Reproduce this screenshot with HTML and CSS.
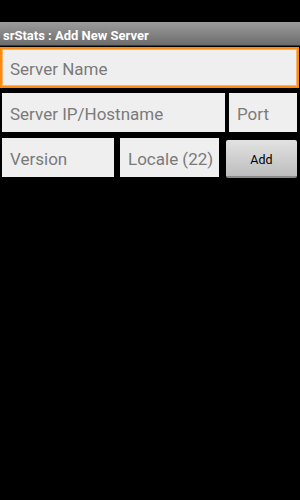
FILE: index.html
```html
<!DOCTYPE html>
<html>
<head>
<meta charset="utf-8">
<link rel="stylesheet" href="styles.css">
</head>
<body>
<div class="status"></div>
<div class="titlebar">srStats : Add New Server</div>
<div class="form">
  <div class="field focused">Server Name</div>
  <div class="row row2">
    <div class="field ip">Server IP/Hostname</div>
    <div class="field port">Port</div>
  </div>
  <div class="row row3">
    <div class="field version">Version</div>
    <div class="field locale">Locale (22)</div>
    <div class="btn">Add</div>
  </div>
</div>
</body>
</html>
```
FILE: styles.css
```css
html, body {
  margin: 0;
  padding: 0;
  background: #000;
  width: 300px;
  height: 500px;
  font-family: Roboto, "Liberation Sans", sans-serif;
}
.status {
  height: 22px;
}
.titlebar {
  height: 23px;
  line-height: 27px;
  padding-left: 3px;
  background: linear-gradient(#9c9c9c, #6c6c6c);
  border-bottom: 1px solid #3a3a3a;
  color: #fff;
  font-weight: bold;
  font-size: 13px;
  box-sizing: content-box;
  overflow: hidden;
}
.form {
  display: flex;
  flex-direction: column;
  padding-top: 1px;
}
.field {
  box-sizing: border-box;
  background: #efefef;
  color: #7a7a7a;
  font-size: 17px;
  display: flex;
  align-items: center;
  padding-left: 8px;
  padding-top: 2px;
  height: 39px;
  white-space: nowrap;
}
.field.focused {
  width: 299px;
  height: 41px;
  border: 2px solid #ff8a0d;
  box-shadow: inset 0 0 0 1px #f6b46a;
  padding-left: 8px;
}
.row {
  display: flex;
  padding-left: 2px;
}
.row2 {
  margin-top: 5px;
  gap: 4px;
}
.ip { width: 223px; }
.port { width: 68px; }
.row3 {
  margin-top: 6px;
  align-items: flex-start;
}
.version { width: 112px; }
.locale { width: 99px; margin-left: 6px; }
.btn {
  box-sizing: border-box;
  margin-left: 7px;
  margin-top: 2px;
  width: 71px;
  height: 38px;
  padding-top: 2px;
  background: linear-gradient(#e2e2e2, #bdbdbd);
  border-bottom: 2px solid #8a8a8a;
  border-radius: 2px;
  color: #000;
  font-size: 12.5px;
  display: flex;
  align-items: center;
  justify-content: center;
}
```
